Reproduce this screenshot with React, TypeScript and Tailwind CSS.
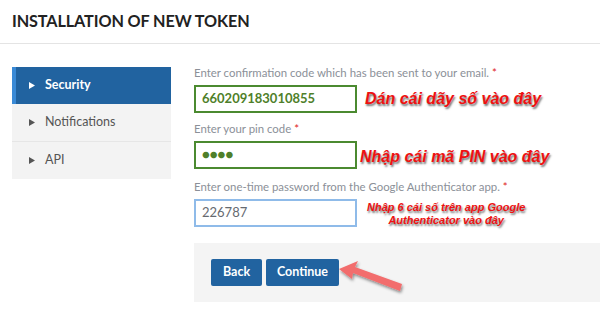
import React from 'react'

const lato = "font-['Lato','Noto_Sans',sans-serif]"
const note = "font-['Liberation_Sans','Arial',sans-serif] font-bold italic text-[#ee1111] [text-shadow:1px_2px_2px_rgba(0,0,0,0.55)]"

function Tri({ white }: { white?: boolean }) {
  return (
    <svg width="6" height="7" viewBox="0 0 6 7" className="shrink-0">
      <path d="M0 0 L6 3.5 L0 7 Z" fill={white ? '#ffffff' : '#555555'} />
    </svg>
  )
}

function Field({
  label,
  value,
  tone,
  children,
}: {
  label: string
  value: string
  tone: 'green' | 'blue'
  children?: React.ReactNode
}) {
  const box =
    tone === 'green'
      ? 'border-2 border-[#4b8a30] text-[#4f7f2a] font-bold'
      : 'border-2 border-[#8fbbe9] text-[#666a70]'
  return (
    <div className="flex flex-col">
      <div className="h-[19px] text-[11.4px] leading-[19px] text-[#8b9098]">
        {label} <span className="text-[#e0221b]">*</span>
      </div>
      <div className="mt-[3px] flex items-center">
        <div className={`flex h-[28px] w-[163px] items-center px-[6px] text-[13px] ${box}`}>{value}</div>
        {children}
      </div>
    </div>
  )
}

export default function App() {
  return (
    <div className={`relative h-[314px] w-[600px] overflow-hidden bg-white ${lato}`}>
      <header className="flex h-[44px] items-center border-b border-[#e4e4e4] px-3">
        <h1 className="text-[16.2px] font-bold tracking-[-0.1px] text-[#222]">INSTALLATION OF NEW TOKEN</h1>
      </header>

      <div className="flex pt-[23px]">
        <nav className="ml-3 flex w-[159px] flex-col self-start bg-[#f3f3f3] text-[12.5px]">
          <div className="flex h-[37px] items-center gap-[10px] border-l-4 border-[#3a8ad6] bg-[#2163a0] pl-[13px] font-bold text-white">
            <Tri white />
            Security
          </div>
          <div className="flex h-[38px] items-center gap-[10px] border-b border-[#e6e6e6] pl-[17px] text-[#555]">
            <Tri />
            Notifications
          </div>
          <div className="flex h-[37px] items-center gap-[10px] pl-[17px] text-[#555]">
            <Tri />
            API
          </div>
        </nav>

        <main className="ml-[23px] flex flex-1 flex-col">
          <div className="-mt-[4px] flex flex-col">
            <Field label="Enter confirmation code which has been sent to your email." value="660209183010855" tone="green">
              <span className={`ml-[8px] text-[16px] ${note}`}>Dán cái dãy số vào đây</span>
            </Field>
            <div className="mt-[6px]">
              <Field label="Enter your pin code" value="●●●●" tone="green">
                <span className={`ml-[3px] mt-[3px] text-[16px] ${note}`}>Nhập cái mã PIN vào đây</span>
              </Field>
            </div>
            <div className="mt-[8px]">
              <Field label="Enter one-time password from the Google Authenticator app." value="226787" tone="blue">
                <span className={`ml-[10px] mt-[2px] text-center text-[11px] leading-[13px] ${note}`}>
                  Nhập 6 cái số trên app Google
                  <br />
                  Authenticator vào đây
                </span>
              </Field>
            </div>
          </div>

          <div className="mt-[16px] flex h-[59px] gap-[4px] bg-[#f4f4f4] pl-[17px] pt-[16px]">
            <button className="h-[27px] w-[51px] rounded-[2px] bg-[#2163a0] text-[12.5px] font-bold text-white">Back</button>
            <button className="h-[27px] w-[73px] rounded-[2px] bg-[#2163a0] text-[12.5px] font-bold text-white">Continue</button>
          </div>
        </main>
      </div>

      <svg className="absolute left-[334px] top-[259px]" width="80" height="40" viewBox="0 0 80 40">
        <defs>
          <filter id="sh" x="-20%" y="-40%" width="140%" height="180%">
            <feDropShadow dx="1" dy="2" stdDeviation="1.5" floodColor="#000" floodOpacity="0.45" />
          </filter>
        </defs>
        <path d="M5 10 L24 2 L21 8 L68 25 L66 32 L19 14 L18 20 Z" fill="#f26d6d" filter="url(#sh)" />
      </svg>
    </div>
  )
}
